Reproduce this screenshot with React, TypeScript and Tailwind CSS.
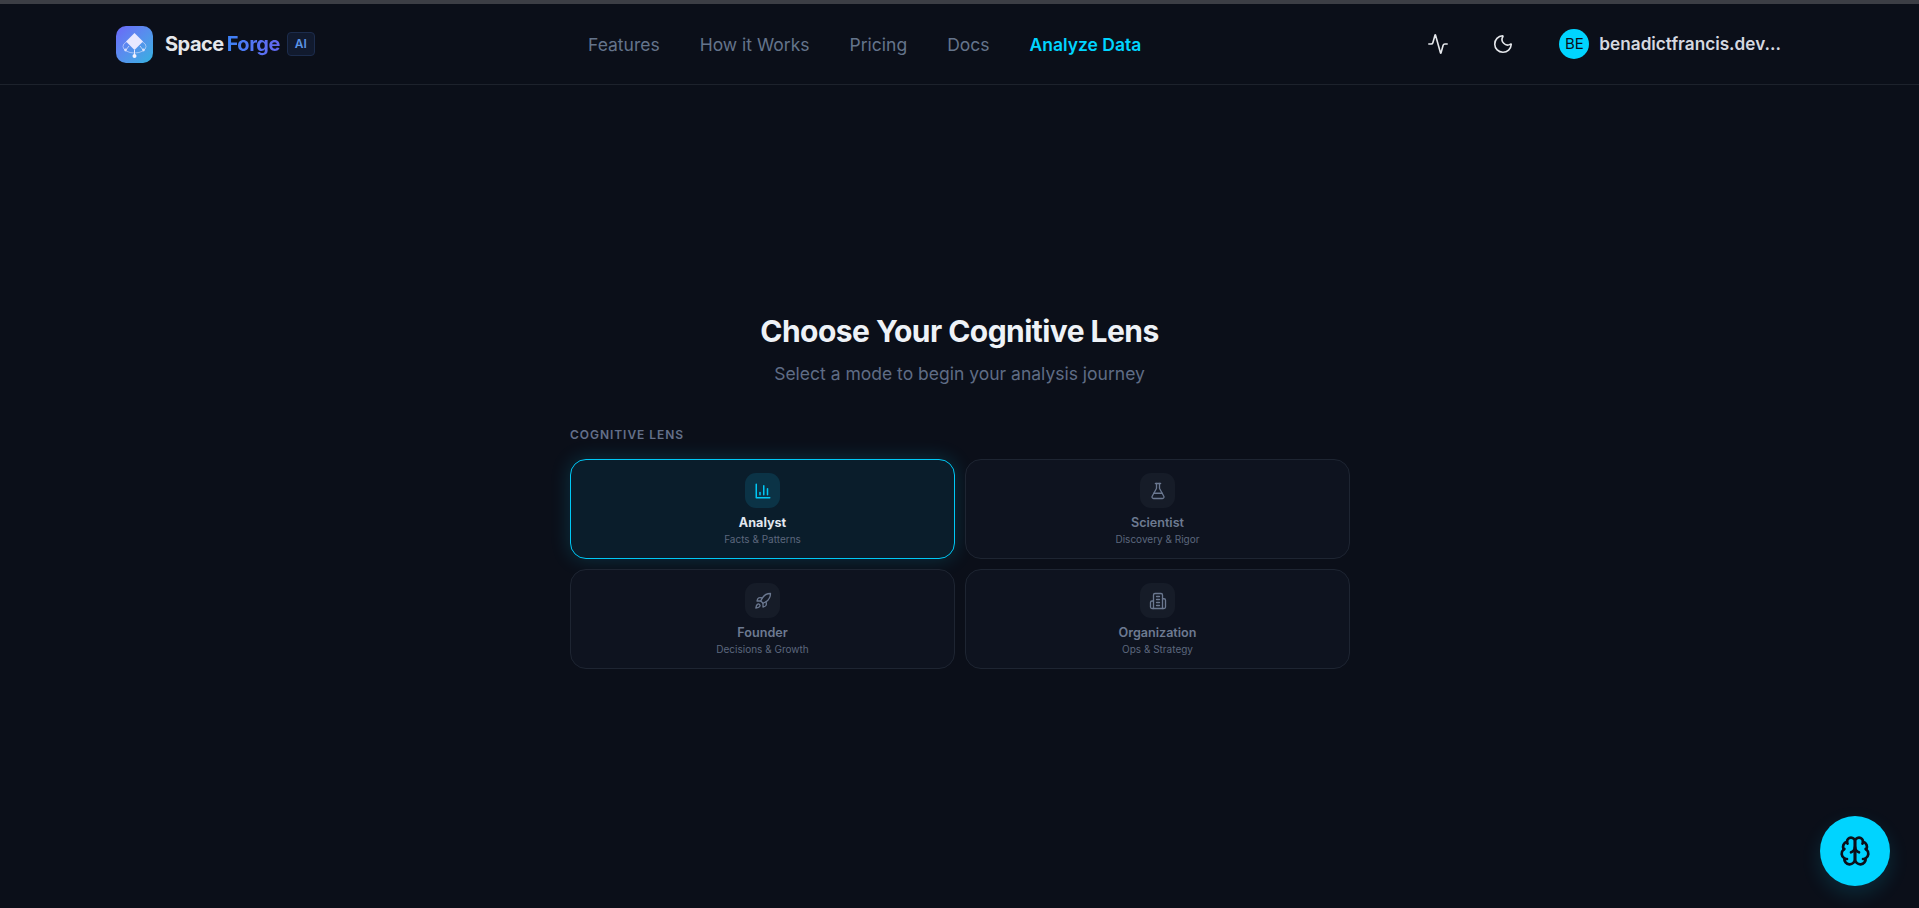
import { Activity, FlaskConical, Moon, Rocket } from "lucide-react";
import type { SVGProps } from "react";

const navLinks = ["Features", "How it Works", "Pricing", "Docs"];

function BarsIcon(props: SVGProps<SVGSVGElement>) {
  return (
    <svg viewBox="0 0 24 24" fill="none" stroke="currentColor" strokeLinecap="round" strokeLinejoin="round" strokeWidth="2" {...props}>
      <path d="M3 3v18h18" />
      <path d="M18 17V9" />
      <path d="M13 17V5" />
      <path d="M8 17v-3" />
    </svg>
  );
}

function BuildingIcon(props: SVGProps<SVGSVGElement>) {
  return (
    <svg viewBox="0 0 24 24" fill="none" stroke="currentColor" strokeLinecap="round" strokeLinejoin="round" strokeWidth="2" {...props}>
      <path d="M6 22V4a2 2 0 0 1 2-2h8a2 2 0 0 1 2 2v18Z" />
      <path d="M6 12H4a2 2 0 0 0-2 2v6a2 2 0 0 0 2 2h2" />
      <path d="M18 9h2a2 2 0 0 1 2 2v9a2 2 0 0 1-2 2h-2" />
      <path d="M10 6h4" />
      <path d="M10 10h4" />
      <path d="M10 14h4" />
      <path d="M10 18h4" />
    </svg>
  );
}

const lenses = [
  { name: "Analyst", sub: "Facts & Patterns", icon: BarsIcon, active: true },
  { name: "Scientist", sub: "Discovery & Rigor", icon: FlaskConical, active: false },
  { name: "Founder", sub: "Decisions & Growth", icon: Rocket, active: false },
  { name: "Organization", sub: "Ops & Strategy", icon: BuildingIcon, active: false },
];

function Logo() {
  return (
    <div className="flex size-[37px] items-center justify-center rounded-[10px] bg-gradient-to-br from-[#6a66f8] to-[#2fb2e0]">
      <svg viewBox="0 0 37 37" className="size-[37px]" fill="none">
        <path d="M18.5 7 L27 15.5 L18.5 24 L10 15.5 Z" fill="#e8e8ff" />
        <ellipse cx="18.5" cy="20.5" rx="11.5" ry="6.5" stroke="#e8e8ff" strokeOpacity="0.55" strokeWidth="1" />
        <path d="M18.5 24 V30" stroke="#e8e8ff" strokeWidth="1" />
        <path d="M13 20 L9.5 24.5 M24 20 L27.5 24.5" stroke="#e8e8ff" strokeOpacity="0.7" strokeWidth="1" />
        <circle cx="18.5" cy="30" r="2" fill="#f2f2ff" />
        <circle cx="9.5" cy="24" r="1.4" fill="#e8e8ff" fillOpacity="0.8" />
        <circle cx="27.5" cy="24" r="1.4" fill="#e8e8ff" fillOpacity="0.8" />
      </svg>
    </div>
  );
}

function BrainIcon() {
  return (
    <svg viewBox="0 0 24 24" className="size-[32px] text-[#0b0f19]" fill="none" stroke="currentColor" strokeWidth="2" strokeLinecap="round" strokeLinejoin="round">
      <path d="M12 5a3 3 0 1 0-5.997.125 4 4 0 0 0-2.526 5.77 4 4 0 0 0 .556 6.588A4 4 0 1 0 12 18Z" />
      <path d="M12 5a3 3 0 1 1 5.997.125 4 4 0 0 1 2.526 5.77 4 4 0 0 1-.556 6.588A4 4 0 1 1 12 18Z" />
      <path d="M15 13a4.5 4.5 0 0 1-3-4 4.5 4.5 0 0 1-3 4" />
      <path d="M17.599 6.5a3 3 0 0 0 .399-1.375" />
      <path d="M6.003 5.125A3 3 0 0 0 6.401 6.5" />
      <path d="M3.477 10.896a4 4 0 0 1 .585-.396" />
      <path d="M19.938 10.5a4 4 0 0 1 .585.396" />
      <path d="M6 18a4 4 0 0 1-1.967-.516" />
      <path d="M19.967 17.484A4 4 0 0 1 18 18" />
    </svg>
  );
}

function Header() {
  return (
    <header className="flex h-[81px] shrink-0 items-center border-b border-[#1d222c] pl-[116px] pr-[138px]">
      <div className="flex w-[472px] items-center">
        <Logo />
        <span className="ml-3 text-[20px] font-bold tracking-[-0.5px] text-[#e5e7eb]">Space</span>
        <span className="ml-[3px] bg-gradient-to-r from-[#3b82f6] to-[#6366f1] bg-clip-text text-[20px] font-bold tracking-[-0.5px] text-transparent">
          Forge
        </span>
        <span className="ml-[7px] flex h-6 w-7 items-center justify-center rounded-[4px] border border-[#1c2c4c] bg-[#111a2e] text-[12px] font-semibold text-[#5b94e6]">
          AI
        </span>
      </div>
      <nav className="flex items-center gap-10 pt-[2px] text-[17.5px] text-[#64748b]">
        {navLinks.map((link) => (
          <a key={link}>{link}</a>
        ))}
        <a className="font-semibold text-[#00d4ff]">Analyze Data</a>
      </nav>
      <div className="ml-auto flex items-center">
        <Activity className="size-[22px] text-[#e5e7eb]" strokeWidth={1.75} />
        <Moon className="ml-[43px] size-[22px] text-[#e5e7eb]" strokeWidth={1.75} />
        <div className="ml-[45px] flex size-[30px] items-center justify-center rounded-full bg-[#00d4ff] text-[15px] text-[#0b0f19]">
          BE
        </div>
        <span className="ml-[10px] text-[17.2px] font-semibold text-[#d5d8e0]">benadictfrancis.dev...</span>
      </div>
    </header>
  );
}

function LensCard({ name, sub, icon: Icon, active }: (typeof lenses)[number]) {
  return (
    <button
      className={
        active
          ? "flex h-[100px] flex-col items-center rounded-[16px] border border-[#00c8f5] bg-[#0a1d2b] pt-[13px] shadow-[0_0_20px_rgba(0,212,255,0.18)]"
          : "flex h-[100px] flex-col items-center rounded-[16px] border border-[#1e2532] bg-[#0e131f] pt-[13px]"
      }
    >
      <span
        className={
          active
            ? "flex size-[35px] items-center justify-center rounded-[11px] bg-[#0b3346] text-[#00c8f5]"
            : "flex size-[35px] items-center justify-center rounded-[11px] bg-[#161c28] text-[#6b7890]"
        }
      >
        <Icon className="size-[18px]" strokeWidth={active ? 2 : 1.75} />
      </span>
      <span className={active ? "mt-[6px] text-[12.6px] font-bold text-[#e2e8f0]" : "mt-[6px] text-[12.6px] font-semibold text-[#6d7a91]"}>
        {name}
      </span>
      <span className="-mt-[0.5px] text-[10px] text-[#5c677d]">{sub}</span>
    </button>
  );
}

export default function App() {
  return (
    <div className="relative flex h-[908px] flex-col overflow-hidden bg-[#0b0f19] font-['Inter',sans-serif]">
      <div className="h-[4px] shrink-0 bg-[#3c3e45]" />
      <Header />
      <main className="flex flex-1 flex-col items-center pt-[226px]">
        <h1 className="text-[30px] font-bold leading-[40px] tracking-[-0.55px] text-[#eef2f7]">Choose Your Cognitive Lens</h1>
        <p className="mt-[9px] text-[17.5px] leading-[28px] text-[#5f6c85]">Select a mode to begin your analysis journey</p>
        <div className="ml-[1px] mt-[38px] w-[780px]">
          <div className="mb-[15px] text-[12px] font-semibold tracking-[0.95px] text-[#64708a]">COGNITIVE LENS</div>
          <div className="grid grid-cols-2 gap-[10px]">
            {lenses.map((lens) => (
              <LensCard key={lens.name} {...lens} />
            ))}
          </div>
        </div>
      </main>
      <button className="absolute left-[1820px] top-[816px] flex size-[70px] items-center justify-center rounded-full bg-[#00d4ff] shadow-[0_8px_20px_rgba(0,212,255,0.14)]">
        <BrainIcon />
      </button>
    </div>
  );
}
